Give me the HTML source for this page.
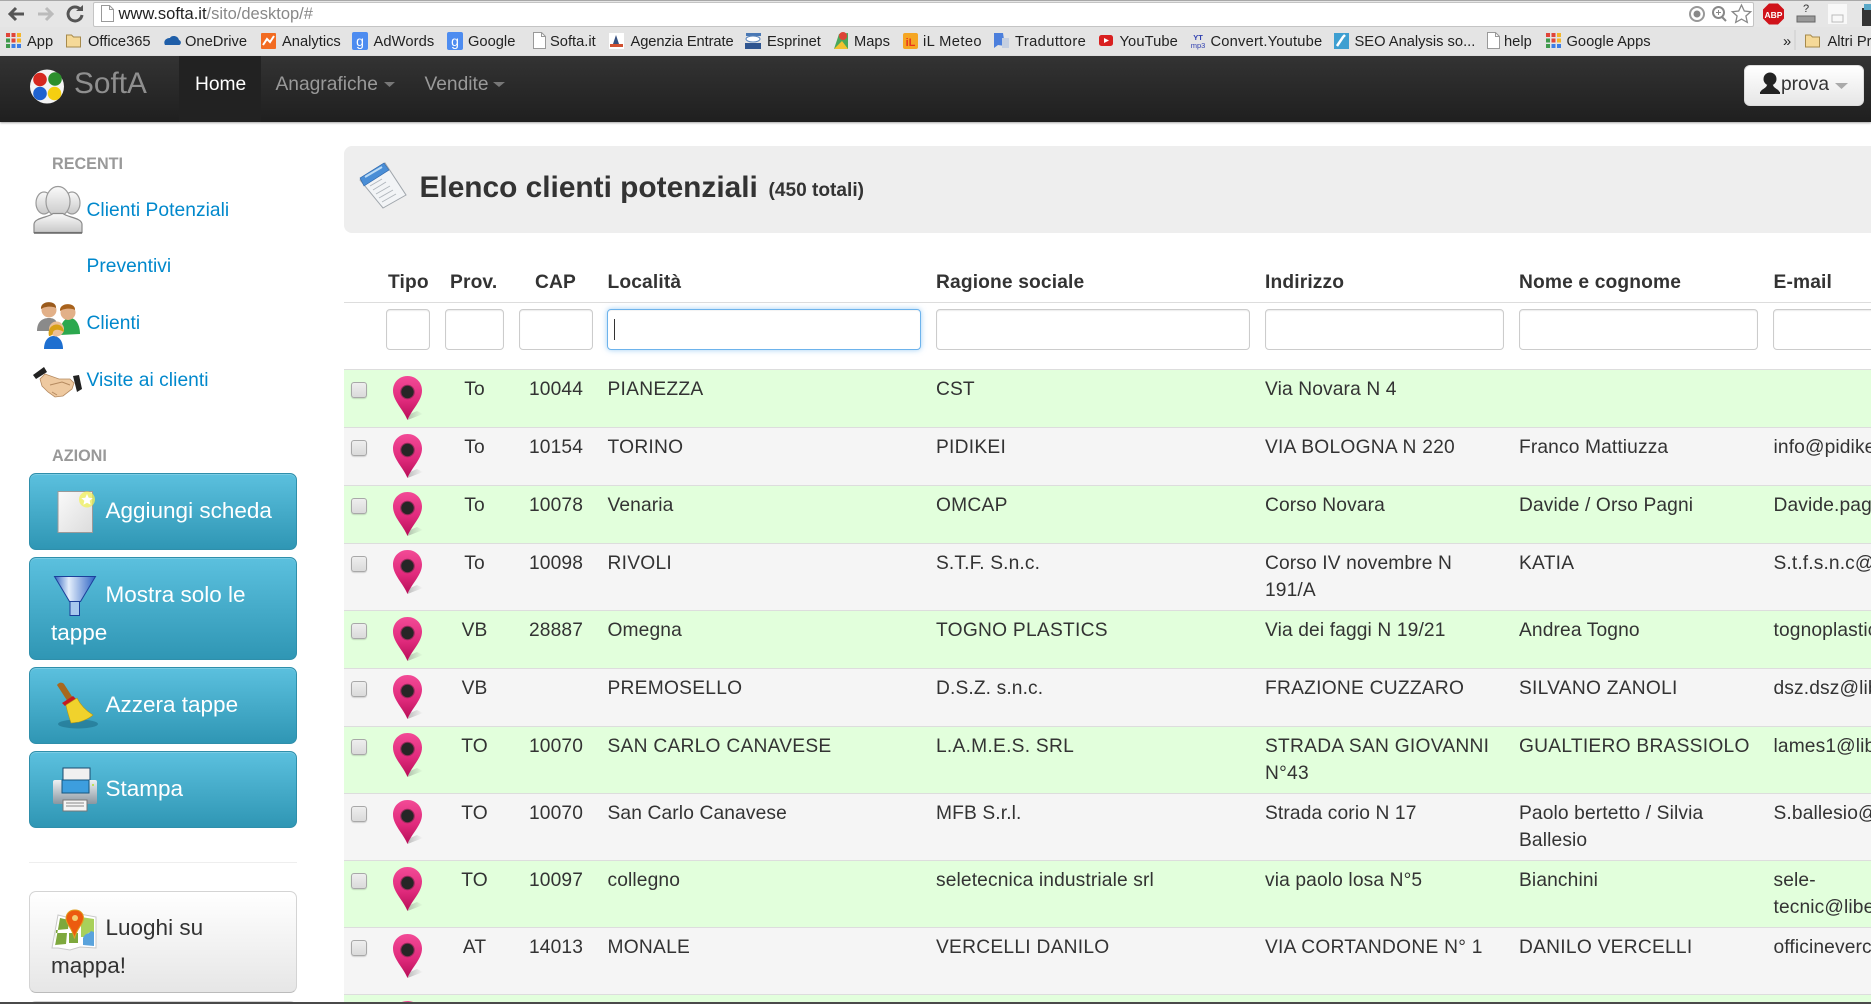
<!DOCTYPE html>
<html lang="it">
<head>
<meta charset="utf-8">
<title>SoftA</title>
<style>
html,body{margin:0;padding:0;width:1871px;height:1004px;overflow:hidden;background:#fff}
body{font-family:"Liberation Sans",Arial,sans-serif;color:#333;font-size:19.2px;line-height:26.8px}
#w{position:absolute;left:0;top:0;width:1871px;height:1004px;overflow:hidden;filter:blur(.3px)}
#w div,#w span,#w a{position:absolute;white-space:nowrap}
#tb{left:0;top:0;width:1871px;height:28px;background:#e6e6e6;border-top:1px solid #a8a8a8;box-sizing:border-box}
#url{left:93px;top:2px;width:1661px;height:25px;background:#fff;border:1px solid #c4c4c4;border-radius:2px;box-sizing:border-box}
.urlt{left:118.5px;top:3px;font-size:16.5px;line-height:22px;color:#888}
.urlt b{font-weight:normal;color:#222}
#bm{left:0;top:27px;width:1871px;height:29px;background:#e4e4e4}
.b{top:33px;font-size:14.7px;line-height:18px;color:#222}
#nav{left:0;top:56px;width:1871px;height:66px;background:linear-gradient(#333,#1f1f1f);box-shadow:0 1px 2px rgba(0,0,0,.35)}
#home{left:179px;top:56px;width:82px;height:66px;background:#222}
.n{top:71px;color:#999;line-height:27px}
#brand{left:74px;top:66px;font-size:29.8px;line-height:36px;color:#8f8f8f}
#user{left:1744px;top:65px;width:120px;height:41px;border-radius:6px;background:linear-gradient(#fff,#e6e6e6);box-sizing:border-box;border:1px solid #ddd}
.hd{font-weight:bold;font-size:16.2px;color:#999;line-height:20px;left:52px}
.l{left:86.5px;color:#0088cc;line-height:27px;letter-spacing:.05px}
.btn{left:29px;width:268px;box-sizing:border-box;border-radius:7px;border:1px solid #2f8fab;background:linear-gradient(#5bc0de,#2f96b4);box-shadow:inset 0 1px 0 rgba(255,255,255,.2)}
.bt{color:#fff;font-size:22.5px;line-height:36px}
.bd{color:#333;font-size:22.5px;line-height:36px}
.gb{left:29px;width:268px;box-sizing:border-box;border-radius:7px;border:1px solid #d4d4d4;border-bottom-color:#bbb;background:linear-gradient(#fff,#e6e6e6)}
#hero{left:344px;top:146px;width:1560px;height:87px;background:#eee;border-radius:8px}
#title{left:419.5px;top:170px;font-size:29.85px;line-height:36px;font-weight:bold;color:#333}
#sub{left:768.5px;top:177px;font-size:19.1px;line-height:27px;font-weight:bold;color:#333}
.th{top:270.4px;font-weight:bold;letter-spacing:.15px}
.ln{left:344px;width:1527px;height:1px;background:#ddd;top:302px}
.in{top:309px;height:41px;box-sizing:border-box;background:#fff;border:1px solid #ccc;border-radius:4px;box-shadow:inset 0 1px 1px rgba(0,0,0,.08)}
.r{left:344px;width:1527px;border-top:1px solid #ddd;box-sizing:border-box}
.g{background:#e2ffdc}
.s{background:#f5f5f5}
.c{left:7px;top:12px;width:16px;height:16px;box-sizing:border-box;background:linear-gradient(#eee,#dadada);border:1px solid #a8a8a8;border-radius:3px;box-shadow:0 1px 1px rgba(0,0,0,.15)}
.r span{top:7.4px;letter-spacing:.13px}
.r span.u{letter-spacing:.26px}
.pv{left:100.5px;width:60px;text-align:center}
.cp{left:172px;width:80px;text-align:center}
.lo{left:263.5px}
.ra{left:592px}
.ad{left:921px}
.no{left:1175px}
.em{left:1429.5px}
</style>
</head>
<body>
<div id="w">
<div id="tb"></div>
<div id="url"></div>
<span class="urlt"><b>www.softa.it</b>/sito/desktop/#</span>
<div id="bm"></div>
<span class="b" style="left:27px">App</span>
<span class="b" style="left:88px">Office365</span>
<span class="b" style="left:185px">OneDrive</span>
<span class="b" style="left:282px">Analytics</span>
<span class="b" style="left:373.5px;letter-spacing:.1px">AdWords</span>
<span class="b" style="left:468px">Google</span>
<span class="b" style="left:550px">Softa.it</span>
<span class="b" style="left:630.5px;letter-spacing:-.1px">Agenzia Entrate</span>
<span class="b" style="left:767px">Esprinet</span>
<span class="b" style="left:854px">Maps</span>
<span class="b" style="left:923px;letter-spacing:.4px">iL Meteo</span>
<span class="b" style="left:1015px;letter-spacing:.4px">Traduttore</span>
<span class="b" style="left:1119.5px;letter-spacing:.1px">YouTube</span>
<span class="b" style="left:1210.5px;letter-spacing:.2px">Convert.Youtube</span>
<span class="b" style="left:1354.5px">SEO Analysis so...</span>
<span class="b" style="left:1504px">help</span>
<span class="b" style="left:1566.5px">Google Apps</span>
<span class="b" style="left:1783px">»</span>
<span class="b" style="left:1827.5px">Altri Preferiti</span>

<div id="nav"></div>
<div id="home"></div>
<span id="brand">SoftA</span>
<span class="n" style="left:195px;color:#fff">Home</span>
<span class="n" style="left:275.5px">Anagrafiche</span>
<span class="n" style="left:424.5px">Vendite</span>
<div id="user"></div>
<span class="n" style="left:1781px;color:#333">prova</span>

<span class="hd" style="top:154px">RECENTI</span>
<a class="l" style="top:196.5px">Clienti Potenziali</a>
<a class="l" style="top:253px">Preventivi</a>
<a class="l" style="top:310px">Clienti</a>
<a class="l" style="top:367px">Visite ai clienti</a>
<span class="hd" style="top:445.5px">AZIONI</span>

<div class="btn" style="top:473px;height:77px"></div>
<span class="bt" style="left:105.5px;top:492.5px">Aggiungi scheda</span>
<div class="btn" style="top:557px;height:103px"></div>
<span class="bt" style="left:105.5px;top:577px">Mostra solo le</span>
<span class="bt" style="left:51px;top:614.5px">tappe</span>
<div class="btn" style="top:667px;height:77px"></div>
<span class="bt" style="left:105.5px;top:687px">Azzera tappe</span>
<div class="btn" style="top:751px;height:77px"></div>
<span class="bt" style="left:105.5px;top:770.5px">Stampa</span>
<div style="left:29px;top:862px;width:268px;height:1px;background:#eee"></div>
<div class="gb" style="top:891px;height:102px"></div>
<span class="bd" style="left:105.5px;top:910px">Luoghi su</span>
<span class="bd" style="left:51px;top:948px">mappa!</span>
<div class="gb" style="top:1001px;height:30px"></div>

<div id="hero"></div>
<span id="title">Elenco clienti potenziali</span>
<span id="sub">(450 totali)</span>

<span class="th" style="left:388px">Tipo</span>
<span class="th" style="left:450px">Prov.</span>
<span class="th" style="left:535px">CAP</span>
<span class="th" style="left:607.5px">Località</span>
<span class="th" style="left:936px">Ragione sociale</span>
<span class="th" style="left:1265px">Indirizzo</span>
<span class="th" style="left:1519px">Nome e cognome</span>
<span class="th" style="left:1773.5px">E-mail</span>
<div class="ln"></div>
<div class="in" style="left:386px;width:44px"></div>
<div class="in" style="left:445px;width:59px"></div>
<div class="in" style="left:519px;width:74px"></div>
<div class="in" style="left:607px;width:314px;border-color:#6db3ec;box-shadow:inset 0 1px 1px rgba(0,0,0,.05),0 0 6px rgba(82,168,236,.55)"></div>
<div style="left:614px;top:319px;width:1px;height:21px;background:#333"></div>
<div class="in" style="left:936px;width:314px"></div>
<div class="in" style="left:1265px;width:239px"></div>
<div class="in" style="left:1519px;width:239px"></div>
<div class="in" style="left:1773px;width:200px"></div>

<div class="r g" style="top:369px;height:58px"><div class="c"></div><span class="pv">To</span><span class="cp">10044</span><span class="lo u">PIANEZZA</span><span class="ra">CST</span><span class="ad">Via Novara N 4</span></div>
<div class="r s" style="top:427px;height:58px"><div class="c"></div><span class="pv">To</span><span class="cp">10154</span><span class="lo u">TORINO</span><span class="ra u">PIDIKEI</span><span class="ad u">VIA BOLOGNA N 220</span><span class="no">Franco Mattiuzza</span><span class="em">info@pidikei.it</span></div>
<div class="r g" style="top:485px;height:58px"><div class="c"></div><span class="pv">To</span><span class="cp">10078</span><span class="lo">Venaria</span><span class="ra u">OMCAP</span><span class="ad">Corso Novara</span><span class="no">Davide / Orso Pagni</span><span class="em">Davide.pagni@omcap.it</span></div>
<div class="r s" style="top:543px;height:67px"><div class="c"></div><span class="pv">To</span><span class="cp">10098</span><span class="lo u">RIVOLI</span><span class="ra">S.T.F. S.n.c.</span><span class="ad">Corso IV novembre N<br>191/A</span><span class="no u">KATIA</span><span class="em">S.t.f.s.n.c@libero.it</span></div>
<div class="r g" style="top:610px;height:58px"><div class="c"></div><span class="pv">VB</span><span class="cp">28887</span><span class="lo">Omegna</span><span class="ra u">TOGNO PLASTICS</span><span class="ad">Via dei faggi N 19/21</span><span class="no">Andrea Togno</span><span class="em">tognoplastics@libero.it</span></div>
<div class="r s" style="top:668px;height:58px"><div class="c"></div><span class="pv">VB</span><span class="lo u">PREMOSELLO</span><span class="ra">D.S.Z. s.n.c.</span><span class="ad u">FRAZIONE CUZZARO</span><span class="no u">SILVANO ZANOLI</span><span class="em">dsz.dsz@libero.it</span></div>
<div class="r g" style="top:726px;height:67px"><div class="c"></div><span class="pv">TO</span><span class="cp">10070</span><span class="lo u">SAN CARLO CANAVESE</span><span class="ra u">L.A.M.E.S. SRL</span><span class="ad u">STRADA SAN GIOVANNI<br>N°43</span><span class="no u">GUALTIERO BRASSIOLO</span><span class="em">lames1@libero.it</span></div>
<div class="r s" style="top:793px;height:67px"><div class="c"></div><span class="pv">TO</span><span class="cp">10070</span><span class="lo">San Carlo Canavese</span><span class="ra">MFB S.r.l.</span><span class="ad">Strada corio N 17</span><span class="no">Paolo bertetto / Silvia<br>Ballesio</span><span class="em">S.ballesio@mfb.it</span></div>
<div class="r g" style="top:860px;height:67px"><div class="c"></div><span class="pv">TO</span><span class="cp">10097</span><span class="lo">collegno</span><span class="ra">seletecnica industriale srl</span><span class="ad">via paolo losa N°5</span><span class="no">Bianchini</span><span class="em">sele-<br>tecnic@libero.it</span></div>
<div class="r s" style="top:927px;height:67px"><div class="c"></div><span class="pv">AT</span><span class="cp">14013</span><span class="lo u">MONALE</span><span class="ra u">VERCELLI DANILO</span><span class="ad u">VIA CORTANDONE N° 1</span><span class="no u">DANILO VERCELLI</span><span class="em">officinevercelli@libero.it</span></div>
<div class="r g" style="top:994px;height:20px"></div>

<svg style="position:absolute;left:0;top:0" width="1871" height="1004" viewBox="0 0 1871 1004">
<defs>
<linearGradient id="pg" x1="0" y1="0" x2="0" y2="1"><stop offset="0" stop-color="#f24a96"/><stop offset=".55" stop-color="#e02a7c"/><stop offset="1" stop-color="#b80e58"/></linearGradient>
<linearGradient id="sh" x1="0" y1="0" x2="1" y2="0"><stop offset="0" stop-color="#666" stop-opacity=".4"/><stop offset="1" stop-color="#666" stop-opacity="0"/></linearGradient>
<linearGradient id="fg" x1="0" y1="0" x2="1" y2="0"><stop offset="0" stop-color="#2d63c0"/><stop offset=".35" stop-color="#e4eefb"/><stop offset="1" stop-color="#2a62c4"/></linearGradient>
<linearGradient id="dg" x1="0" y1="0" x2="1" y2="1"><stop offset="0" stop-color="#fafafa"/><stop offset="1" stop-color="#dcdcdc"/></linearGradient>
<linearGradient id="ug" x1="0" y1="0" x2="0" y2="1"><stop offset="0" stop-color="#fafafa"/><stop offset="1" stop-color="#c8c8c8"/></linearGradient>
<linearGradient id="prg" x1="0" y1="0" x2="0" y2="1"><stop offset="0" stop-color="#eef1f3"/><stop offset="1" stop-color="#8a96a0"/></linearGradient>
<g id="pin">
<path d="M14.5 44 L30 38 L24 35 L17 38 Z" fill="url(#sh)"/>
<path d="M14.5 0 C6 0 0 6.5 0 14.5 C0 25 10 33 14.5 44 C19 33 29 25 29 14.5 C29 6.5 23 0 14.5 0Z" fill="url(#pg)"/>
<circle cx="14.5" cy="16" r="7.3" fill="#9a2a5c"/>
<circle cx="14.5" cy="16" r="6.2" fill="#262626"/>
</g>
<g id="fold"><path d="M0.5 3 h5 l2 2 h7 v10 h-14z" fill="#f5d998" stroke="#a68a4c"/></g>
<g id="doc"><path d="M1.5 .5 h8 l4 4 v12 h-12z" fill="#fff" stroke="#999"/><path d="M9.5 .5 v4 h4" fill="none" stroke="#999"/></g>
<g id="apps"><rect width="4" height="4" fill="#e0453a"/><rect x="5.5" width="4" height="4" fill="#e0453a"/><rect x="11" width="4" height="4" fill="#f3b52a"/><rect y="5.5" width="4" height="4" fill="#3f9a4c"/><rect x="5.5" y="5.5" width="4" height="4" fill="#e0453a"/><rect x="11" y="5.5" width="4" height="4" fill="#f3b52a"/><rect y="11" width="4" height="4" fill="#3f9a4c"/><rect x="5.5" y="11" width="4" height="4" fill="#3d7ee6"/><rect x="11" y="11" width="4" height="4" fill="#3d7ee6"/></g>
<g id="gb"><rect width="16" height="18" rx="2" fill="#4d8cf0"/><text x="8" y="14" font-family="Liberation Sans" font-size="14" fill="#fff" text-anchor="middle">g</text></g>
</defs>

<!-- browser nav -->
<path d="M10 14H24 M16 8l-6 6 6 6" fill="none" stroke="#555" stroke-width="3"/>
<path d="M38 14H52 M46 8l6 6-6 6" fill="none" stroke="#bbb" stroke-width="3"/>
<path d="M80 9 A7 7 0 1 0 82 15" fill="none" stroke="#555" stroke-width="3"/><path d="M76 9h7v-6z" fill="#555" transform="translate(0,2)"/>
<use href="#doc" x="100" y="5"/>
<circle cx="1697" cy="14" r="7" fill="none" stroke="#999" stroke-width="2"/><circle cx="1697" cy="14" r="3.5" fill="#888"/>
<circle cx="1718.5" cy="12.5" r="5.5" fill="none" stroke="#888" stroke-width="2"/><path d="M1722 17l4 4" stroke="#888" stroke-width="2"/><path d="M1716 12.5h5M1718.5 10v5" stroke="#888"/>
<path d="M1741.5 5l2.8 6 6.4.7-4.8 4.3 1.4 6.4-5.8-3.3-5.8 3.3 1.4-6.4-4.8-4.3 6.4-.7z" fill="#fff" stroke="#888" stroke-width="1.3"/>
<path d="M1769 3.5h9l6 6v9l-6 6h-9l-6-6v-9z" fill="#d0131b"/>
<text x="1773.5" y="18" font-family="Liberation Sans" font-size="8.5" font-weight="bold" fill="#fff" text-anchor="middle">ABP</text>
<text x="1806" y="12" font-family="Liberation Sans" font-size="11" fill="#333" text-anchor="middle">?</text>
<rect x="1797" y="16" width="18" height="6" fill="#999" stroke="#666"/>
<rect x="1828" y="4" width="19" height="20" fill="#f8f8f8"/><rect x="1832" y="15" width="11" height="7" fill="none" stroke="#bbb"/>
<path d="M1862 8h9v18h-9z" fill="#333"/><path d="M1864 4h7v6h-7z" fill="#5aa9c9"/>

<!-- bookmarks icons -->
<use href="#apps" x="6" y="33"/>
<use href="#fold" x="66" y="32"/>
<path d="M165 45c-2-4 1-7 5-7 1-3 8-3 9 2 3 1 2 5 0 5z" fill="#1f5ea8"/>
<rect x="261" y="33" width="15" height="16" rx="1" fill="#f26b21"/><path d="M263 45l4-6 3 3 4-6" fill="none" stroke="#fff" stroke-width="2"/>
<use href="#gb" x="352" y="32"/>
<use href="#gb" x="447" y="32"/>
<use href="#doc" x="532" y="32"/>
<rect x="609" y="33" width="15" height="16" fill="#fff"/><path d="M612 47l4-12 4 12z" fill="#35507f"/><path d="M610 44h13v3h-13z" fill="#d05030"/>
<rect x="746" y="33" width="15" height="3" fill="#4a78b4"/><ellipse cx="753" cy="39" rx="7" ry="3" fill="#fff" stroke="#5b86bd"/><rect x="745" y="43" width="16" height="6" fill="#2f5590"/>
<path d="M834 49l5-15 9-1v16z" fill="#4aa85a"/><path d="M834 49l8-8 6 8z" fill="#f2c230"/><circle cx="843" cy="36" r="4" fill="#dd4436"/>
<rect x="903" y="33" width="15" height="16" rx="2" fill="#f5a623"/><text x="910.5" y="46" font-family="Liberation Sans" font-size="11" font-weight="bold" fill="#e8341c" text-anchor="middle">iL</text>
<path d="M994 33h9l2 13-7-1-4 3z" fill="#4c7fdc"/><path d="M1002 38h7v10h-7z" fill="#c5cfe0"/>
<rect x="1099" y="35" width="14" height="11" rx="2.5" fill="#d92020"/><path d="M1104 38l5 2.5-5 2.5z" fill="#fff"/>
<text x="1198" y="40" font-family="Liberation Sans" font-size="7.5" fill="#3040b0" font-weight="bold" text-anchor="middle">YT</text><text x="1198" y="48" font-family="Liberation Sans" font-size="7.5" fill="#3040b0" text-anchor="middle">mp3</text>
<rect x="1334" y="33" width="15" height="16" fill="#3e9fd1"/><path d="M1337 46l6-9 2-2" stroke="#fff" stroke-width="2.5" fill="none"/>
<use href="#doc" x="1486" y="32"/>
<use href="#apps" x="1546" y="33"/>
<path d="M1795 30v20" stroke="#ccc"/>
<use href="#fold" x="1805" y="32"/>

<!-- brand -->
<ellipse cx="47" cy="86.5" rx="17" ry="17" fill="#f4f4f4"/>
<circle cx="40" cy="79.5" r="6.8" fill="#d6281f"/><circle cx="55" cy="79" r="6.8" fill="#2d8f2d"/><circle cx="40" cy="93.5" r="6.8" fill="#1f62d0"/><circle cx="54.5" cy="93.5" r="6.8" fill="#f5cf10"/>
<!-- carets -->
<path d="M384 82h11l-5.5 5z" fill="#777"/><path d="M493 82h12l-6 5z" fill="#777"/>
<path d="M1835 83h13l-6.5 6z" fill="#aaa"/>
<!-- user icon -->
<circle cx="1770" cy="79" r="6.5" fill="#222"/><path d="M1760 94c0-5 6-5 7-9h6c1 4 7 4 7 9z" fill="#222"/><rect x="1760" y="92" width="20" height="2" fill="#222"/>

<!-- sidebar icons -->
<g stroke="#9a9a9a" stroke-width="1.2" fill="url(#ug)">
<ellipse cx="44" cy="203" rx="8" ry="11"/><ellipse cx="72" cy="203" rx="8" ry="11"/>
<ellipse cx="58" cy="201.5" rx="12" ry="15"/>
<path d="M34 232.5v-8c0-7 15-7 19-11h10c4 4 19 4 19 11v8z" stroke="#8a8a8a"/>
</g>
<path d="M34 233h48" stroke="#666" stroke-width="1.5"/>
<g>
<path d="M37 331c0-9 5-13 12-13 7 0 9 4 9 13z" fill="#8a8a8a"/><circle cx="49" cy="310" r="7.5" fill="#e2b088"/><path d="M41 309c-1-9 16-9 15-1-3-2-11-2-15 1z" fill="#9a5a1c"/>
<path d="M60 335c0-11 4-17 10-17 6 0 10 7 10 16z" fill="#2ca84e"/><circle cx="68" cy="312.5" r="7.5" fill="#e2b088"/><path d="M60 311c-1-9 16-9 15-1-3-2-11-2-15 1z" fill="#a8621c"/>
<path d="M44 349c0-9 5-13 9.5-13s9.5 4 9.5 13z" fill="#1e6fd0"/><circle cx="56.5" cy="329" r="7.5" fill="#eabf98"/><path d="M49 336c-3-13 14-16 15-4-3-2-9-4-11 0 0 3-2 4-4 4z" fill="#d8a018"/>
</g>
<g>
<path d="M33 375l11-8 3 5-11 7z" fill="#222"/><path d="M73 376l6-1 3 14-5 3z" fill="#222"/>
<path d="M45 374l14 5h11l4 4-2 6-9 7-8 1-7-5-6-6-2-7z" fill="#eec9a0" stroke="#b58a60" stroke-width=".8"/>
<path d="M50 385l12-3 8 3M52 392l5 3" fill="none" stroke="#b58a60"/>
</g>

<!-- btn 1 doc -->
<rect x="58" y="491.5" width="34.5" height="41" fill="url(#dg)" stroke="#9a9a9a"/>
<circle cx="87" cy="499.5" r="8" fill="#f2f25a" opacity=".75"/>
<path d="M87 494l1.7 3.7 4 .4-3 2.7.9 4-3.6-2-3.6 2 .9-4-3-2.7 4-.4z" fill="#fff"/>
<!-- funnel -->
<path d="M54.5 576.5h41l-15 25h-11z" fill="url(#fg)" stroke="#1c3f9a"/>
<rect x="70" y="601.5" width="9.5" height="14" fill="#a8c8ee" stroke="#1c3f9a"/>
<!-- broom -->
<ellipse cx="78" cy="724" rx="20" ry="4.5" fill="#1b6a85" opacity=".55"/>
<path d="M57 685c2-3 5-3 7-1l9 14-5 4z" fill="#a8681e"/>
<path d="M62 703l11-7 3 3-11 7z" fill="#c41a22"/>
<path d="M66 705l11-7c3 6 8 12 16 17-3 3-10 6-14 7l-8 1c-2-6-4-12-5-18z" fill="#f0d22c" stroke="#b39914" stroke-width=".6"/>
<!-- printer -->
<rect x="67" y="768" width="27" height="15" fill="#f0f0f0" stroke="#1b4a6e" transform="translate(-4,0)"/>
<rect x="53" y="780" width="44" height="24" rx="2" fill="url(#prg)"/>
<rect x="62" y="780" width="27" height="13" fill="#3d9ede" stroke="#15567f"/>
<rect x="92" y="784" width="2" height="2" fill="#bde05a"/>
<rect x="63" y="800" width="24" height="11" fill="#f4f4f4" stroke="#777"/>
<path d="M66 803h18M66 806h18" stroke="#888"/>
<!-- map -->
<path d="M52 948l6-33 12 3 10-4 16 3v31l-16-1-10 3-12-2z" fill="#fff" stroke="#c9c9c9"/>
<path d="M55 946l5-28 9 2-1 9-11 1-1 0zM70 920l8-2 1 11-9 0zM56 933h11l-1 11-11 1zM69 933h9l0 10-9 0z" fill="#7ea83d"/>
<path d="M81 917l13 2 0 13c-5 0-7 1-9 5h-4z" fill="#a8d05a"/>
<path d="M83 938c3-6 5-3 8-7l3 1v14l-11-1z" fill="#5aa3dc"/>
<path d="M75 910c-6 0-9 4-9 8.5 0 6 6 9 8.5 20 2.5-11 9-14 9-20.5 0-4.5-3-8-8.5-8z" fill="#ec5b0f" stroke="#e0a020"/>
<circle cx="75" cy="918" r="3" fill="#f3cf70"/>

<!-- notepad -->
<path d="M360 180l25-17 21 32-23 13z" fill="#f2f4f6" stroke="#a0a6ac"/>
<path d="M360 178l24-15 5 7-25 16z" fill="#4a8ed6" stroke="#2d64a8" stroke-width=".6"/>
<path d="M365 177l17-10" stroke="#bcdcf6" stroke-width="2"/>
<g stroke="#b0b6bc" stroke-width=".9"><path d="M370 186l12-7M373 190l13-8M376 194l14-8M379 198l14-8M382 202l14-8"/></g>

<!-- pins -->
<use href="#pin" x="393" y="376"/>
<use href="#pin" x="393" y="434"/>
<use href="#pin" x="393" y="492"/>
<use href="#pin" x="393" y="550"/>
<use href="#pin" x="393" y="617"/>
<use href="#pin" x="393" y="675"/>
<use href="#pin" x="393" y="733"/>
<use href="#pin" x="393" y="800"/>
<use href="#pin" x="393" y="867"/>
<use href="#pin" x="393" y="934"/>
<use href="#pin" x="393" y="1001"/>
<rect x="0" y="1002" width="1871" height="2" fill="#4a4a4a"/>
</svg>
</div>
</body>
</html>
